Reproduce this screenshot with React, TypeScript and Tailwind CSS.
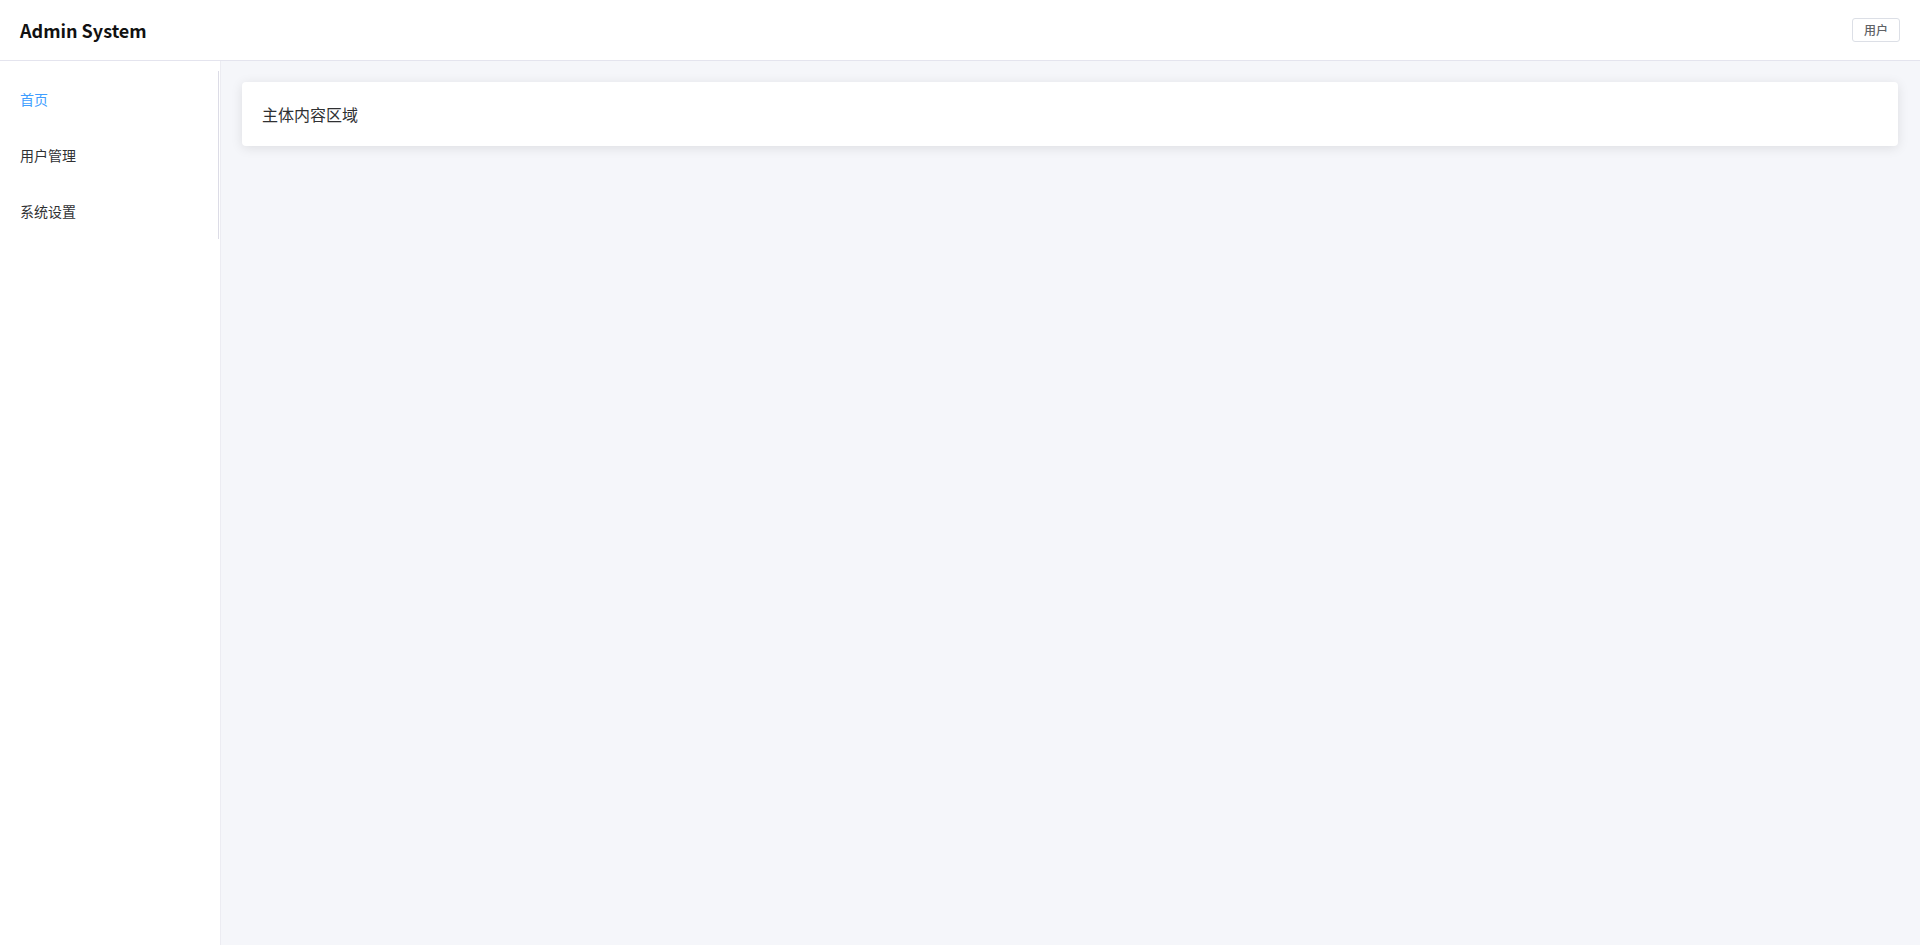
export default function App() {
  const font = { fontFamily: '"Noto Sans CJK SC", "Noto Sans", sans-serif' };
  const items = [
    { label: "首页", active: true },
    { label: "用户管理", active: false },
    { label: "系统设置", active: false },
  ];
  return (
    <div className="flex h-[945px] flex-col bg-white" style={font}>
      <header className="box-content flex h-[60px] shrink-0 items-center justify-between border-b border-[#e4e4ee] bg-white px-5">
        <div className="pt-[1px] text-[18px] font-bold text-[#111]">Admin System</div>
        <button className="flex h-[24px] w-[48px] items-center justify-center rounded-[3px] border border-[#dcdfe6] bg-white text-[12px] font-medium text-[#606266]">
          用户
        </button>
      </header>
      <div className="flex min-h-0 flex-1">
        <aside className="w-[221px] shrink-0 border-r border-[#ececf2] bg-white pt-[10px]">
          <nav className="w-[219px] border-r border-[#dcdce6]">
            {items.map((it) => (
              <div
                key={it.label}
                className={`flex h-[56px] items-center px-5 text-[14px] ${it.active ? "text-[#409eff]" : "text-[#303133]"}`}
              >
                {it.label}
              </div>
            ))}
          </nav>
        </aside>
        <main className="flex-1 bg-[#f5f6fa] pl-[21px] pr-[22px] pt-[21px]">
          <div className="rounded-[4px] bg-white px-5 py-5 text-[16px] leading-[24px] text-[#303133] shadow-[0_2px_12px_0_rgba(0,0,0,0.1)]">
            主体内容区域
          </div>
        </main>
      </div>
    </div>
  );
}
